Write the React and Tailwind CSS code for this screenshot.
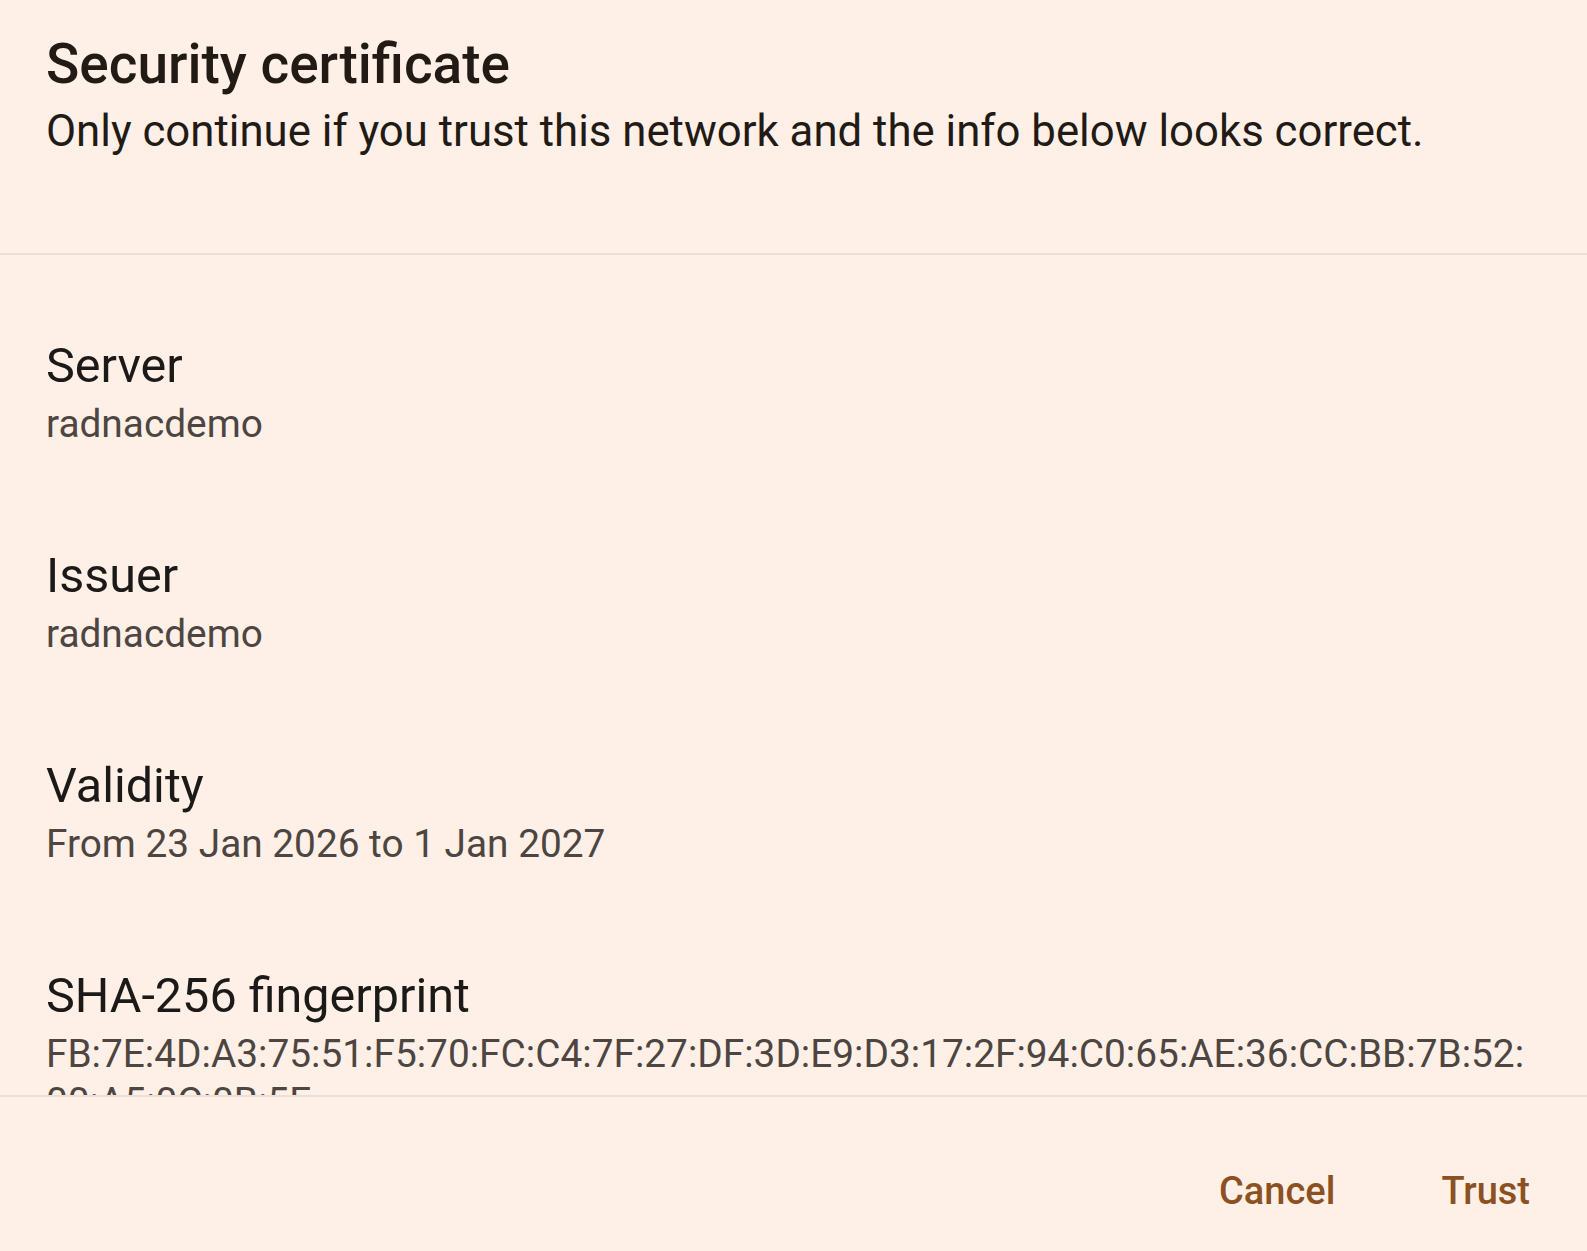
export default function App() {
  const items = [
    { label: "Server", value: ["radnacdemo"] },
    { label: "Issuer", value: ["radnacdemo"] },
    { label: "Validity", value: ["From 23 Jan 2026 to 1 Jan 2027"] },
    {
      label: "SHA-256 fingerprint",
      value: [
        "FB:7E:4D:A3:75:51:F5:70:FC:C4:7F:27:DF:3D:E9:D3:17:2F:94:C0:65:AE:36:CC:BB:7B:52:",
        "00:A5:0C:0B:5E",
      ],
    },
  ];
  return (
    <div
      className="w-full h-[1251px] bg-[#fff0e7] flex flex-col overflow-hidden"
      style={{ fontFamily: "Roboto, 'Liberation Sans', sans-serif" }}
    >
      <div className="px-[46px] pt-[32px] pb-[94px]">
        <div className="text-[55px] leading-[64px] font-medium text-[#221a15]">
          Security certificate
        </div>
        <div className="mt-[7px] text-[43.75px] leading-[56px] text-[#221a15]">
          Only continue if you trust this network and the info below looks correct.
        </div>
      </div>
      <div className="h-[2px] bg-[#eedfd6]" />
      <div className="h-[840px] overflow-hidden pl-[46px] pr-[40px] pt-[33px]">
        {items.map((it) => (
          <div key={it.label} className="py-[50px]">
            <div className="text-[48.5px] leading-[56px] text-[#1c1a18]">{it.label}</div>
            <div className="mt-[6px] text-[38.8px] leading-[48px] text-[#4d4541] whitespace-nowrap">
              {it.value.map((line) => (
                <div key={line}>{line}</div>
              ))}
            </div>
          </div>
        ))}
      </div>
      <div className="h-[2px] bg-[#eedfd6]" />
      <div className="flex justify-end gap-[106px] pr-[57px] pt-[70px]">
        <span className="text-[38px] leading-[48px] font-medium text-[#8b5122]">Cancel</span>
        <span className="text-[38px] leading-[48px] font-medium text-[#8b5122]">Trust</span>
      </div>
    </div>
  );
}
